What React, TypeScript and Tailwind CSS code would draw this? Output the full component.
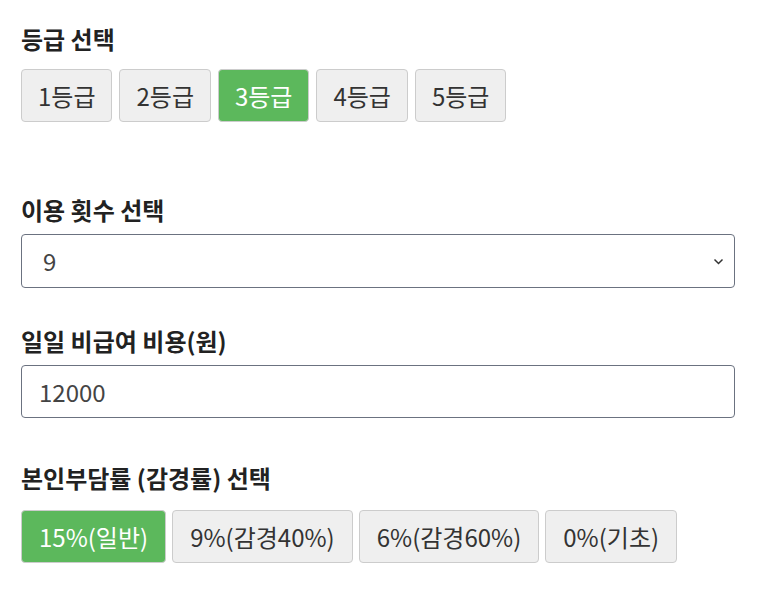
import { useState } from 'react'

const GRADES = ['1등급', '2등급', '3등급', '4등급', '5등급']
const RATES = ['15%(일반)', '9%(감경40%)', '6%(감경60%)', '0%(기초)']

function ToggleButton({
  label,
  active,
  onClick,
  pad,
}: {
  label: string
  active: boolean
  onClick: () => void
  pad: string
}) {
  return (
    <button
      type="button"
      onClick={onClick}
      className={`h-[53px] ${pad} rounded-[4px] border text-[24px] leading-none ${
        active ? 'bg-[#5cb85c] border-[#cccccc] text-white' : 'bg-[#efefef] border-[#cccccc] text-[#333333]'
      }`}
    >
      {label}
    </button>
  )
}

export default function App() {
  const [grade, setGrade] = useState('3등급')
  const [count, setCount] = useState('9')
  const [cost, setCost] = useState('12000')
  const [rate, setRate] = useState('15%(일반)')

  return (
    <div
      className="w-[766px] h-[609px] bg-white px-[21px] pt-[22px] text-[#222]"
      style={{ fontFamily: '"Noto Sans CJK KR", "Noto Sans", sans-serif' }}
    >
      <p className="text-[24px] font-bold leading-[34px] mb-[13px]">등급 선택</p>
      <div className="flex gap-[7px]">
        {GRADES.map((g) => (
          <ToggleButton key={g} label={g} pad="px-[16px]" active={grade === g} onClick={() => setGrade(g)} />
        ))}
      </div>

      <p className="text-[24px] font-bold leading-[34px] mt-[71px] mb-[7px]">이용 횟수 선택</p>
      <div className="relative w-[714px]">
        <select
          value={count}
          onChange={(e) => setCount(e.target.value)}
          className="appearance-none w-full h-[54px] rounded-[4px] border border-[#6b7280] pl-[21px] text-[24px] text-[#444] bg-white outline-none"
        >
          {Array.from({ length: 20 }, (_, i) => String(i + 1)).map((n) => (
            <option key={n} value={n}>
              {n}
            </option>
          ))}
        </select>
        <svg
          className="absolute right-[11px] top-[24px] pointer-events-none"
          width="11"
          height="7"
          viewBox="0 0 11 7"
          fill="none"
          stroke="#333"
          strokeWidth="1.5"
        >
          <path d="M1.5 1.5l4 4 4-4" />
        </svg>
      </div>

      <p className="text-[24px] font-bold leading-[34px] mt-[36px] mb-[7px]">일일 비급여 비용(원)</p>
      <input
        value={cost}
        onChange={(e) => setCost(e.target.value)}
        className="w-[714px] h-[53px] rounded-[4px] border border-[#6b7280] px-[17px] text-[24px] text-[#444] outline-none"
      />

      <p className="text-[24px] font-bold leading-[34px] mt-[43px] mb-[15px]">본인부담률 (감경률) 선택</p>
      <div className="flex gap-[6px]">
        {RATES.map((r) => (
          <ToggleButton key={r} label={r} pad="px-[17px]" active={rate === r} onClick={() => setRate(r)} />
        ))}
      </div>
    </div>
  )
}
